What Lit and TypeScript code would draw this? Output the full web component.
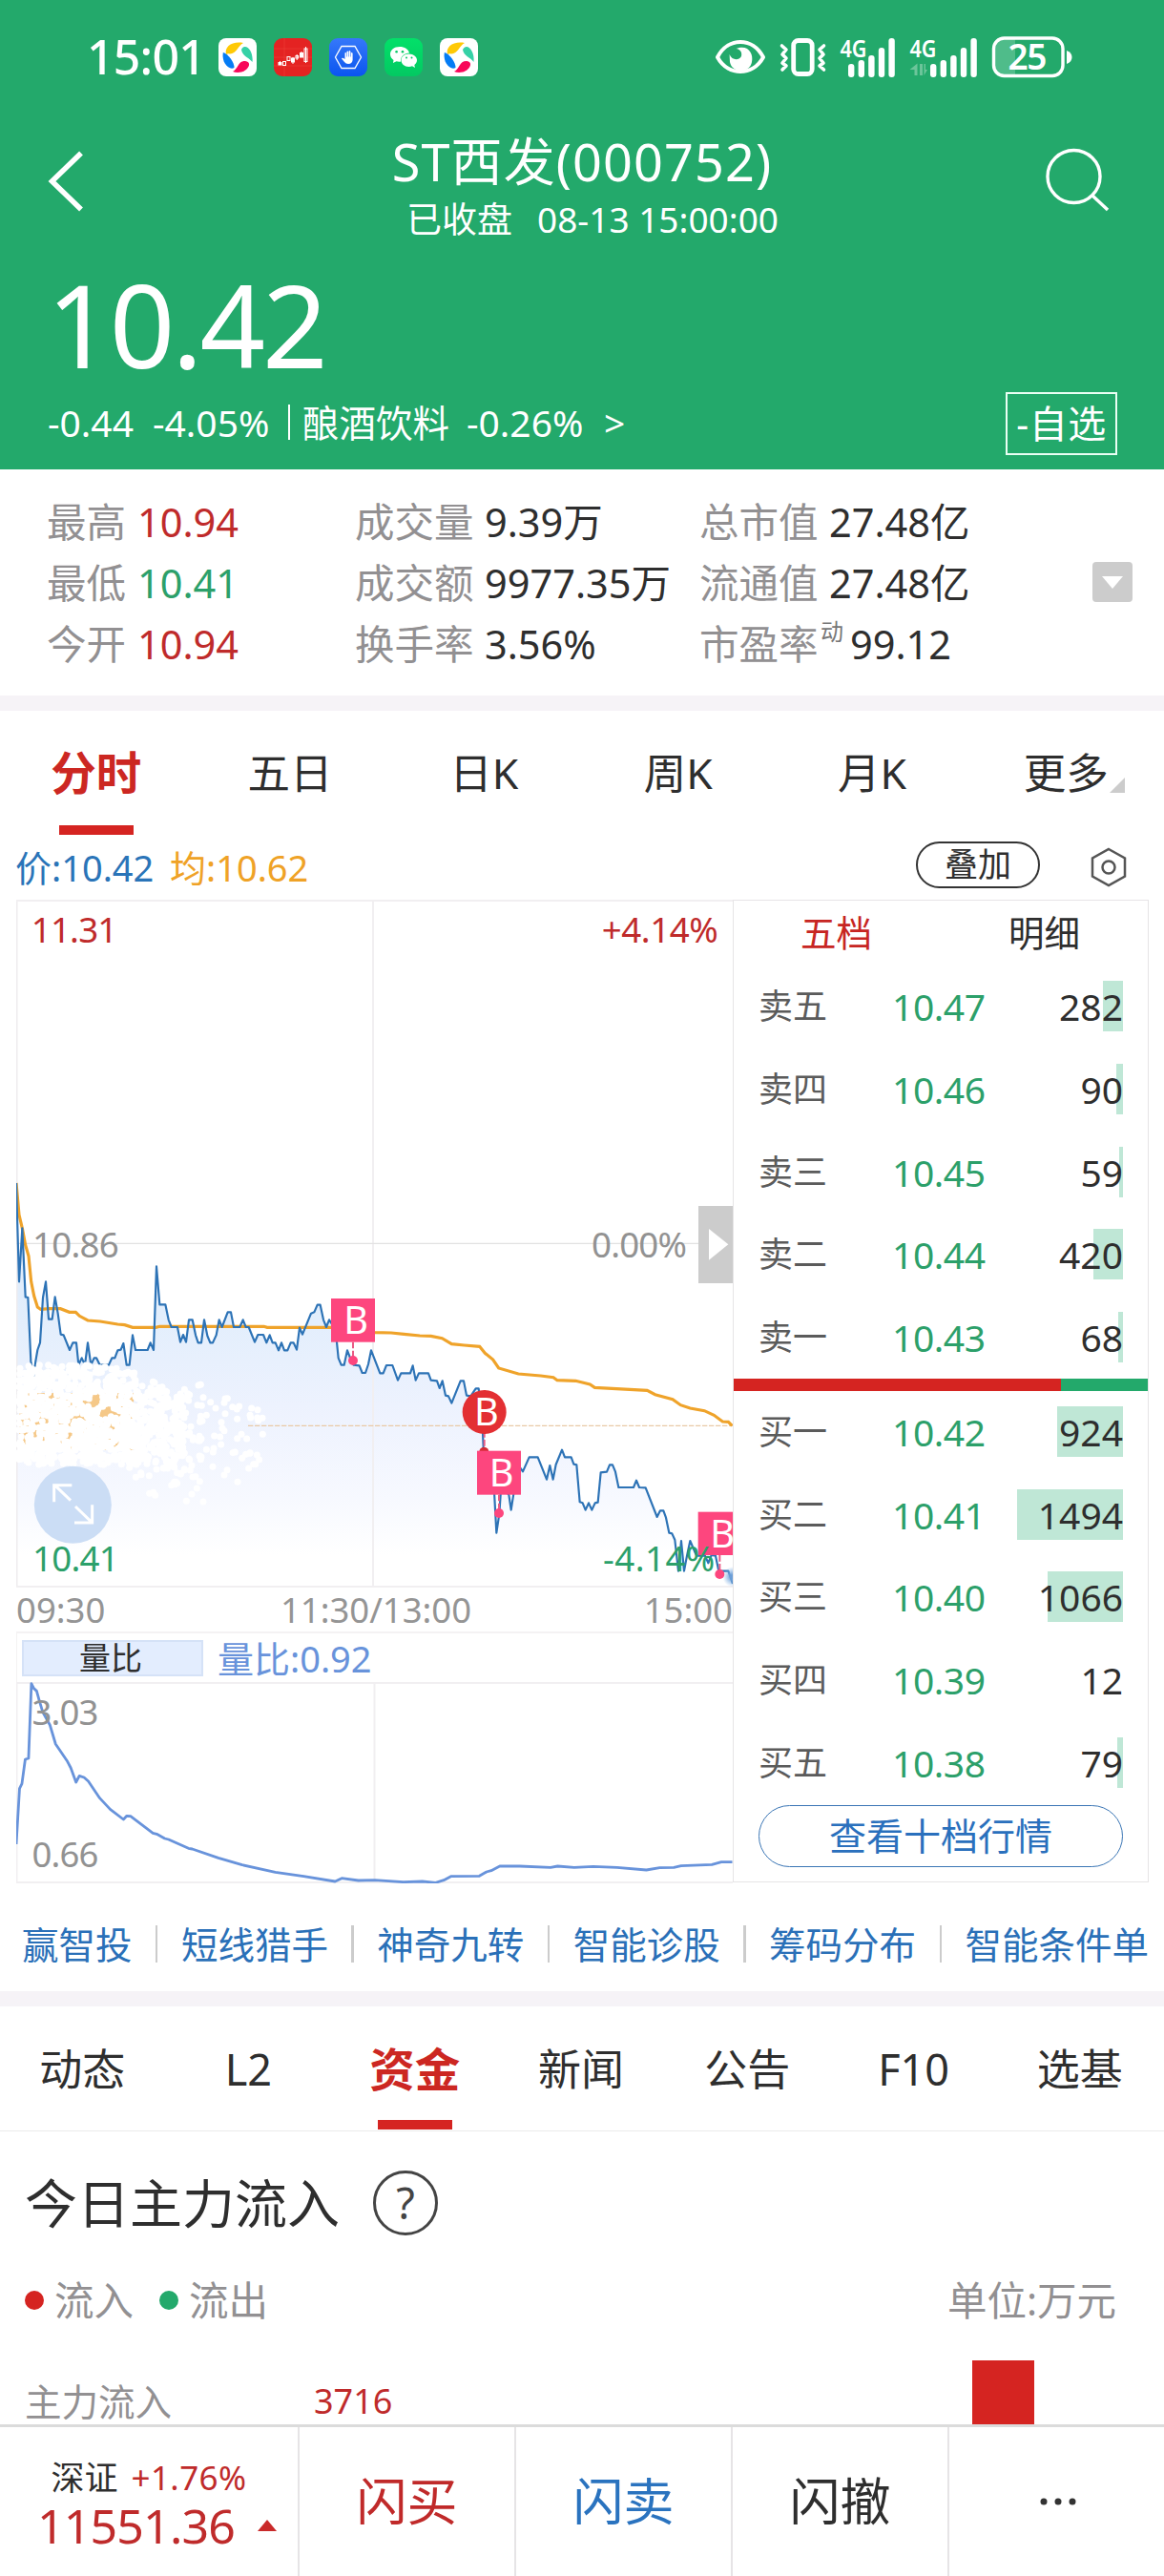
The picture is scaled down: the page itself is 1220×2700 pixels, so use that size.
import { LitElement, html, svg, css } from "lit";
import { customElement } from "lit/decorators.js";
import { classMap } from "lit/directives/class-map.js";
import { styleMap } from "lit/directives/style-map.js";

const PRICE =
  "51,180 60,490 70,322 80,538 88,540 97,740 105,790 112,740 118,705 126,682 135,540 144,490 153,608 164,608 173,538 182,590 191,656 200,658 219,705 229,682 240,682 247,752 257,730 267,752 276,682 286,752 296,730 303,730 314,752 342,752 352,730 361,730 370,706 380,704 388,684 398,752 407,752 417,658 426,705 464,705 473,682 483,705 492,442 502,562 520,562 530,610 539,633 558,633 567,680 576,657 585,680 594,610 605,610 615,658 623,682 633,682 642,610 652,660 661,682 669,682 680,658 689,610 698,633 716,586 726,586 735,633 754,633 764,610 773,633 782,633 801,680 811,657 828,657 838,682 848,658 857,682 866,682 876,706 885,682 894,706 904,706 914,682 923,682 933,704 942,635 951,656 978,590 988,586 998,563 1007,563 1017,610 1026,633 1035,610 1055,640 1064,730 1073,752 1082,752 1092,706 1103,735 1112,752 1130,754 1139,777 1149,777 1158,750 1167,706 1195,778 1205,778 1215,753 1234,753 1251,800 1261,778 1290,778 1298,754 1307,800 1317,778 1347,778 1355,800 1374,802 1382,825 1391,802 1401,848 1410,850 1420,872 1448,802 1458,802 1467,848 1480,850 1496,826 1505,826 1515,900 1520,1010 1535,1100 1554,1150 1561,1280 1570,1220 1576,1130 1590,1150 1600,1160 1607,1208 1616,1150 1625,1060 1644,1087 1664,1042 1691,1042 1719,1112 1729,1068 1739,1112 1748,1065 1767,1019 1776,1042 1796,1042 1804,1064 1813,1066 1823,1183 1832,1186 1841,1208 1851,1186 1861,1208 1871,1186 1880,1184 1889,1090 1908,1088 1917,1066 1926,1066 1935,1088 1945,1137 1992,1137 2001,1115 2010,1137 2030,1138 2066,1230 2076,1210 2086,1210 2094,1232 2104,1280 2113,1282 2122,1302 2133,1400 2142,1305 2151,1400 2160,1352 2170,1305 2190,1352 2217,1352 2227,1375 2237,1350 2250,1352 2260,1400 2290,1400 2304,1440";

const AVERAGE =
  "51,180 60,280 70,322 80,375 90,410 98,490 107,535 118,570 128,577 155,575 190,575 218,586 238,586 250,598 276,612 315,615 370,624 392,626 417,634 490,634 502,631 830,631 840,634 1040,634 1179,650 1230,651 1270,655 1320,660 1355,661 1390,668 1420,686 1460,690 1508,694 1525,715 1550,735 1568,762 1630,780 1700,786 1740,791 1752,800 1810,802 1855,813 1870,823 2035,832 2060,845 2115,860 2140,878 2170,888 2215,896 2245,910 2272,930 2290,931 2302,943";

const RATIO =
  "34,815 41,640 46,625 53,548 60,545 66,310 71,325 77,333 82,360 90,400 105,440 117,500 142,555 149,575 160,620 167,600 177,605 186,617 210,670 232,705 260,737 267,726 275,727 322,780 330,783 347,797 355,800 397,828 405,830 460,858 510,880 580,903 640,916 706,932 720,922 755,929 790,928 850,934 890,932 918,936 935,928 950,916 1010,915 1025,902 1035,898 1053,884 1095,884 1160,888 1175,884 1210,888 1250,885 1300,888 1362,896 1390,889 1420,888 1435,883 1500,879 1520,871 1543,871";

/* Repeatable scatter for the particle cloud at the left of the chart. */
function particles(): Array<[number, number]> {
  let seed = 20240813;
  const rnd = () => {
    seed = (Math.imul(seed, 1664525) + 1013904223) >>> 0;
    return seed / 4294967296;
  };
  const out: Array<[number, number]> = [];
  for (let i = 0; i < 760; i++) {
    out.push([58 + rnd() * 370, 775 + rnd() * 275]);
  }
  for (let i = 0; i < 50; i++) out.push([58 + rnd() * 360, 752 + rnd() * 30]);
  for (let i = 0; i < 60; i++) out.push([50 + rnd() * 420, 1030 + rnd() * 35]);
  for (let i = 0; i < 260; i++) {
    out.push([400 + rnd() * 180, 785 + (rnd() + rnd()) * 155]);
  }
  for (let i = 0; i < 170; i++) {
    const a = rnd() * Math.PI * 2;
    const r = Math.pow(rnd(), 0.8);
    out.push([590 + Math.cos(a) * r * 245, 975 + Math.sin(a) * r * 215]);
  }
  return out.filter(([x, y]) => y > 745 + Math.max(0, x - 250) * 0.15);
}

const DOTS = particles();

const STATS = [
  ["最高", "10.94", "red", "成交量", "9.39万", "总市值", "27.48亿", ""],
  ["最低", "10.41", "green", "成交额", "9977.35万", "流通值", "27.48亿", ""],
  ["今开", "10.94", "red", "换手率", "3.56%", "市盈率", "99.12", "动"],
];

const ASKS: Array<[string, string, number]> = [
  ["卖五", "10.47", 282],
  ["卖四", "10.46", 90],
  ["卖三", "10.45", 59],
  ["卖二", "10.44", 420],
  ["卖一", "10.43", 68],
];
const BIDS: Array<[string, string, number]> = [
  ["买一", "10.42", 924],
  ["买二", "10.41", 1494],
  ["买三", "10.40", 1066],
  ["买四", "10.39", 12],
  ["买五", "10.38", 79],
];

@customElement("app-root")
export class AppRoot extends LitElement {
  static styles = css`
    :host {
      display: block;
      width: 1220px;
      height: 2700px;
      overflow: hidden;
      background: #fff;
      color: #2e2e2e;
      font-family: "Noto Sans", "Noto Sans CJK SC", sans-serif;
      white-space: nowrap;
    }
    * { box-sizing: border-box; }
    svg { display: block; flex: none; }
    .red { color: #bf2b2b; }
    .green { color: #2ca06a; }

    .header { height: 492px; background: #23a96b; color: #fff; }
    .status { height: 120px; padding: 0 96px 0 91px; display: flex; align-items: center; }
    .clock { font-size: 50px; line-height: 60px; width: 138px; letter-spacing: -0.8px; font-weight: 500; margin-top: -2px; }
    .apps { display: flex; gap: 18px; flex: 1; }
    .sys { display: flex; align-items: center; }
    .sys svg { overflow: visible; }
    .titlebar { height: 138px; display: flex; justify-content: space-between; align-items: flex-start; padding: 0 56px 0 48px; }
    .titlebar svg { margin-top: 37px; }
    .titlebar .find { margin-top: 34px; }
    .titles { text-align: center; padding-left: 36px; }
    .name { font-size: 54px; line-height: 64px; padding-top: 17px; letter-spacing: 1.1px; }
    .state { font-size: 37px; line-height: 44px; margin-top: 7px; display: flex; justify-content: center; gap: 26px; padding-left: 22px; }
    .price { font-size: 120px; line-height: 140px; height: 140px; margin-top: 12px; padding-left: 49px; letter-spacing: -3px; }
    .change { display: flex; justify-content: space-between; align-items: center; height: 66px; margin-top: 1px; padding: 0 49px 0 50px; }
    .figures { font-size: 39px; display: grid; grid-template-columns: 110px 139px 18px 172px 144px auto; align-items: center; line-height: 50px; margin-top: -3px; }
    .figures .ind { font-size: 38.5px; }
    .bar { width: 2px; height: 37px; background: #fff; margin-left: 3px; }
    .fav { width: 117px; height: 66px; border: 2px solid #eafff4; font-size: 40px; line-height: 61px; text-align: center; letter-spacing: 0.6px; }

    .stats { height: 237px; padding: 23px 33px 0 49px; display: flex; justify-content: space-between; }
    .rows { display: grid; grid-template-columns: 323px 361px 300px; grid-auto-rows: 64px; font-size: 41.5px; }
    .cell { display: flex; align-items: center; line-height: 64px; }
    .key { color: #929092; width: 95px; }
    .key.wide { width: 136px; }
    .sup { font-size: 24px; line-height: 24px; color: #777; margin: -26px 7px 0 -9px; }
    .more { width: 42px; height: 42px; border-radius: 4px; background: #ccc; margin-top: 74px; display: flex; align-items: center; justify-content: center; }
    .band { height: 16px; background: #f6f3f7; }

    .tabs { height: 130px; display: grid; grid-template-columns: repeat(6, 1fr); font-size: 44.5px; line-height: 130px; text-align: center; }
    .tab { display: flex; flex-direction: column; align-items: center; justify-content: space-between; position: relative; right: 1px; }
    .tab.on { color: #cc2722; font-weight: 700; font-size: 47.5px; }
    .ink { width: 78px; height: 10px; background: #d52421; }
    .tabs .tab { height: 130px; }
    .tabs .label { height: 120px; }
    .corner { position: absolute; right: 40px; top: 70px; }

    .legend { height: 68px; padding: 0 39px 0 16px; display: flex; align-items: center; font-size: 38px; line-height: 60px; }
    .legend .p { color: #2a74b8; width: 162px; }
    .legend .a { color: #efa226; flex: 1; }
    .overlay { width: 130px; height: 49px; border: 2.5px solid #333; border-radius: 25px; font-size: 35px; line-height: 44px; text-align: center; margin-right: 53px; margin-top: -5px; }

    .market { display: grid; grid-template-columns: 751px 436px; padding-left: 17px; height: 1031px; }
    .charts { display: flex; flex-direction: column; }
    .axis { height: 46px; display: flex; justify-content: space-between; align-items: center; font-size: 36.5px; color: #959595; line-height: 46px; }
    .axis .mid { padding-left: 3px; }
    .indicator { height: 53px; border: 2px solid #f4f2f3; border-width: 2px 0 0 1px; display: flex; align-items: center; padding-left: 5px; }
    .chip { width: 190px; height: 38px; border: 2px solid #d5e2f7; background: #e3edfe; text-align: center; font-size: 33px; line-height: 34px; margin-right: 15px; padding-right: 4px; }
    .ratio { font-size: 38px; color: #6893db; line-height: 48px; }

    .book { border: 1.5px solid #e6e4e6; height: 1030px; }
    .booktabs { display: flex; height: 84px; font-size: 37.5px; line-height: 68px; }
    .booktabs .five { color: #c72522; margin-left: 70px; }
    .booktabs .detail { margin-left: 143px; }
    .quote { height: 53px; margin-bottom: 33.75px; padding: 0 26px 0 26px; display: grid; grid-template-columns: 140px 120px 1fr; align-items: center; line-height: 53px; }
    .quote .side { font-size: 36px; color: #5b5b5b; }
    .quote .px { font-size: 39px; color: #2ca06a; letter-spacing: -0.4px; }
    .vol { display: flex; justify-content: flex-end; height: 53px; font-size: 39px; position: relative; }
    .vol i { position: absolute; right: 0; top: 0; height: 53px; background: #bfe7d6; }
    .vol b { position: relative; font-weight: 400; }
    .split { height: 13px; display: flex; background: #23a96b; margin: -17px 0 16px; }
    .split i { width: 343px; background: #d52421; }
    .ten { margin: -16px 26px 0; height: 65px; border: 1.5px solid #3b76b5; border-radius: 33px; color: #2a70bd; font-size: 39px; line-height: 61px; text-align: center; }

    .links { height: 113px; padding: 14px 16px 0 23px; display: flex; align-items: center; justify-content: space-between; color: #2a70b8; font-size: 38.5px; line-height: 60px; }
    .links i { width: 2.5px; height: 39px; background: #ccc; }
    .tabs2 { height: 131px; display: grid; grid-template-columns: repeat(7, 1fr); font-size: 45px; line-height: 132px; border-bottom: 1.5px solid #ececec; text-align: center; }
    .tabs2 .label { height: 119px; }
    .tabs2 .tab { height: 129px; }

    .flow { height: 307px; padding: 42px 50px 0 26px; }
    .heading { display: flex; align-items: center; height: 66px; font-size: 55px; line-height: 66px; gap: 35px; }
    .help { width: 68px; height: 68px; border: 3px solid #444; border-radius: 50%; text-align: center; font-size: 45px; line-height: 61px; color: #444; }
    .units { display: flex; align-items: center; height: 60px; margin-top: 39px; color: #929092; font-size: 41.5px; line-height: 60px; }
    .dot { width: 20px; height: 20px; border-radius: 50%; background: #d52421; margin-right: 11px; }
    .dot.g { background: #23a96b; margin-left: 27px; }
    .units .unit { margin-left: auto; }
    .inflow { display: flex; height: 67px; margin-top: 33px; line-height: 86px; font-size: 38.5px; color: #929092; }
    .inflow .n { width: 303px; }
    .inflow .v { font-size: 36px; width: 690px; }
    .inflow i { width: 65px; height: 67px; background: #d52421; }

    .footer { position: relative; height: 159px; border-top: 3px solid #dbdbdb; background: #fff; display: grid; grid-template-columns: 314px repeat(4, 227px); font-size: 53px; text-align: center; }
    .footer > div { border-right: 2px solid #e6e4e6; line-height: 156px; }
    .footer > .index { line-height: 50px; padding-top: 28px; display: flex; flex-direction: column; align-items: center; }
    .small { font-size: 35px; display: flex; gap: 14px; line-height: 50px; }
    .small .red { letter-spacing: 0.4px; }
    .big { font-size: 50px; display: flex; align-items: center; gap: 24px; line-height: 50px; letter-spacing: -0.8px; padding-left: 17px; }
    .buy { color: #c02a2a; }
    .sell { color: #2a73bf; }
    .footer > .dots { display: flex; align-items: center; justify-content: center; border: 0; }
  `;

  private pinwheel() {
    return html`<svg width="40" height="40" viewBox="0 0 40 40">
      <rect width="40" height="40" rx="8" fill="#fff" />
      <path d="M8 17C6 9 14 3 26 5C20.500 8 19 16 12 16.500Q9.500 16 8 17Z" fill="#ffc905" />
      <path d="M24 12C28 4 37 13 35.500 25C32 20 25 19 24 12Z" fill="#35d1a6" />
      <path d="M4.800 15C10 16 17 26 16.500 31C11 34 3 26 4.800 15Z" fill="#057cf5" />
      <path d="M15 35C21 32 20 24 28 24C36 25 31 34 24 35.500Q19 36.500 15 35Z" fill="#f80759" />
    </svg>`;
  }

  private bars(x: number) {
    return [66, 62, 57, 49, 39].map(
      (t, i) => svg`<rect x=${x + i * 10.6} y=${t - 38} width="6.4" height=${79 - t + 1} rx="3" />`,
    );
  }

  private statusBar() {
    return html`<div class="status">
      <div class="clock">15:01</div>
      <div class="apps">
        ${this.pinwheel()}
        <svg width="40" height="40" viewBox="0 0 40 40">
          <rect width="40" height="40" rx="9" fill="#e42322" />
          <path d="M11 0V40M0 11H40M0 20H40M0 29H40" stroke="#ec3f3b" stroke-width=".6" />
          <g fill="#fff" stroke="#fff" stroke-width="1">
            <path d="M6.500 24V28M20 20V27M29 14V20" /><rect x="5" y="25.500" width="3" height="2.500" /><rect x="18.500" y="21" width="3" height="4" /><rect x="27.500" y="15.500" width="3" height="4.500" />
          </g>
          <g fill="none" stroke="#fff" stroke-width="1"><rect x="9.500" y="24.500" width="3" height="4" /><rect x="14" y="19.500" width="3" height="4" /><rect x="23" y="18.500" width="2.500" height="2.500" /><rect x="32" y="11" width="3" height="13.500" /><path d="M24.200 17V23M33.500 9V26" /></g>
        </svg>
        <svg width="40" height="40" viewBox="0 0 40 40">
          <defs><linearGradient id="bl" x1="0" y1="0" x2="0" y2="1"><stop stop-color="#3678fa" /><stop offset="1" stop-color="#0a55ef" /></linearGradient></defs>
          <rect width="40" height="40" rx="9" fill="url(#bl)" />
          <path d="M13 8.500H27L33.500 20L27 31.500H13L6.500 20Z" fill="none" stroke="#fff" stroke-width="1.300" />
          <path d="M16 25L13 21.500Q13.500 19.800 16.500 22V15.500Q17.200 14.500 18 15.500V19.500H18.500V14Q19.300 12.800 20.200 14V19.500H20.700V13.500Q21.500 12.500 22.400 14V19.500H22.900V15.500Q24 14.500 24.600 16V23Q24 27 20 27Q17.500 27 16 25Z" fill="#fff" />
        </svg>
        <svg width="40" height="40" viewBox="0 0 40 40">
          <defs><linearGradient id="wc" x1="0" y1="0" x2="0" y2="1"><stop stop-color="#03e069" /><stop offset="1" stop-color="#03c962" /></linearGradient></defs>
          <rect width="40" height="40" rx="9" fill="url(#wc)" />
          <path d="M16 9C10 9 6 12.500 6 17C6 19.500 7.500 21.500 9.500 23L9 26L12.500 24.300Q15 25 17 24.500C16.500 19 21 15.800 26 15.500C25 11.500 21 9 16 9Z" fill="#fff" />
          <path d="M25.500 16.500C20.500 16.500 17.500 19.500 17.500 23C17.500 27 21 30 25.500 30Q27.500 30 29 29.300L32 31L31.300 28C33 26.700 34 25 34 23C34 19.500 30.500 16.500 25.500 16.500Z" fill="#fff" />
          <g fill="#06c864"><circle cx="12.600" cy="14.300" r="1.300" /><circle cx="19" cy="14.300" r="1.300" /><circle cx="23" cy="20.500" r="1" /><circle cx="28.500" cy="20.500" r="1" /></g>
        </svg>
        ${this.pinwheel()}
      </div>
      <div class="sys">
        <svg width="376" height="44" viewBox="748 -1 376 44" fill="#fff" font-family="Noto Sans">
          <path d="M752 21C763 -0.500 789 -0.500 800 21C789 41 763 41 752 21Z" fill="none" stroke="#fff" stroke-width="4" stroke-linejoin="round" />
          <path d="M771.500 12C784 7 790 17 788 26C786 38 767 38 765 26L764.600 18C767 24 774 25 777 20C778 16 776 12.500 771.500 12Z" />
          <rect x="831.700" y="3.500" width="19.500" height="35" rx="5" fill="none" stroke="#fff" stroke-width="4.800" />
          <path d="M819.500 9L824 13L820 18L824 22L820 27L824 30L820 34M863.500 9L859 13L863 18L859 22L863 27L859 30L863.500 34" fill="none" stroke="#fff" stroke-width="3.600" stroke-linejoin="round" stroke-linecap="round" />
          <text x="880.500" y="20.500" font-size="26" font-weight="600" textLength="28" lengthAdjust="spacingAndGlyphs">4G</text>
          ${this.bars(889)}
          <text x="953.500" y="20.500" font-size="26" font-weight="600" textLength="28" lengthAdjust="spacingAndGlyphs">4G</text>
          ${this.bars(975)}
          <path d="M953.500 34L961.500 27.500V40H958.500V34ZM964 28H967V40H964ZM968.500 28H970V34H972L968.500 40Z" fill="#6cc59a" />
          <path d="M1050 1H1064V41H1050Q1042 40 1042 30V11Q1042 2 1050 1Z" fill="#4fbc8a" />
          <rect x="1041.500" y="1" width="72.500" height="39.500" rx="11" fill="none" stroke="#fff" stroke-width="3.400" />
          <text x="1056.500" y="34" font-size="37" font-weight="600" textLength="41">25</text>
          <path d="M1118 14Q1123.500 16 1123.500 21Q1123.500 26 1118 28Z" />
        </svg>
      </div>
    </div>`;
  }

  private mainChart() {
    return html`<svg width="751" height="721" viewBox="51 -711 2253 2163" font-family="Noto Sans" font-size="110">
      <defs>
        <linearGradient id="area" gradientUnits="userSpaceOnUse" x1="0" y1="180" x2="0" y2="1350">
          <stop offset="0" stop-color="#d8e8fb" /><stop offset=".35" stop-color="#e2eefc" /><stop offset=".6" stop-color="#edf2fe" /><stop offset=".85" stop-color="#f7f9ff" /><stop offset="1" stop-color="#fff" />
        </linearGradient>
        <radialGradient id="glow"><stop offset=".2" stop-color="#6d9fd8" /><stop offset="1" stop-color="#8bb8e8" stop-opacity="0" /></radialGradient>
      </defs>
      <polygon points=${`51,1452 ${PRICE} 2304,1452`} fill="url(#area)" />
      <g fill="none">
        <path d="M53 -711V1452" stroke="#eeecee" stroke-width="5" />
        <path d="M51 -708H2304M51 1449H2304M1173 -711V1452" stroke="#f1eff1" stroke-width="6" />
        <path d="M51 370H2304" stroke="#e2e2e2" stroke-width="4" />
        <path d="M780 943H2304" stroke="#e9c9a6" stroke-width="4" stroke-dasharray="16 5" />
      </g>
      <polyline points=${AVERAGE} fill="none" stroke="#efa32a" stroke-width="9.500" />
      <polyline points=${PRICE} fill="none" stroke="#2d73b6" stroke-width="6.500" stroke-linejoin="round" />
      <circle cx="2304" cy="1418" r="32" fill="url(#glow)" />
      <rect x="60" y="840" width="360" height="180" fill="#f5c888" />
      <g fill="#fff">${DOTS.map(([x, y]) => svg`<circle cx=${x.toFixed(0)} cy=${y.toFixed(0)} r="10.500" />`)}</g>
      <circle cx="229" cy="1192" r="121.500" fill="#cbddf5" />
      <path d="M222 1178L172 1130M226 1130H170V1183M237 1197L288 1246M234 1248H290V1192" fill="none" stroke="#fff" stroke-width="9" />
      <g fill="#929292">
        <text x="102" y="413" textLength="272">10.86</text>
        <text x="1860" y="413" textLength="300">0.00%</text>
      </g>
      <g fill="#bf2b2b">
        <text x="98" y="-576" textLength="272">11.31</text>
        <text x="1892" y="-576" textLength="366">+4.14%</text>
      </g>
      <path d="M1110 680V738M1523 960V1025M1569 1160V1218M2263 1350V1410" stroke="#ea5b85" stroke-width="6" stroke-dasharray="20 7" fill="none" />
      <circle cx="1522" cy="1025" r="15" fill="#d62b35" />
      <g fill="#fd467e">
        <circle cx="1110" cy="738" r="15" /><circle cx="1569" cy="1218" r="15" /><circle cx="2263" cy="1410" r="15" />
        <rect x="1041" y="543" width="138" height="137" /><rect x="1500" y="1022" width="138" height="138" /><rect x="2195" y="1214" width="138" height="136" />
      </g>
      <circle cx="1523" cy="900" r="69" fill="#e32f33" />
      <g fill="#fff" font-size="119">
        <text x="1081" y="654">B</text><text x="1491" y="941">B</text><text x="1538" y="1133">B</text><text x="2233" y="1326">B</text>
      </g>
      <g fill="#2ca06a">
        <text x="102" y="1400" textLength="272">10.41</text>
        <text x="1896" y="1400" textLength="352">-4.14%</text>
      </g>
      <rect x="2196" y="252" width="108" height="243" fill="#ccc" />
      <path d="M2229 324L2290 373L2229 422Z" fill="#fff" />
    </svg>`;
  }

  private quote([side, px, vol]: [string, string, number]) {
    const w = vol < 20 ? 0 : Math.round(vol * 0.0742);
    return html`<div class="quote">
      <span class="side">${side}</span><span class="px">${px}</span>
      <span class="vol"><i style=${styleMap({ width: `${w}px` })}></i><b>${vol}</b></span>
    </div>`;
  }

  private tab(label: string, on: boolean, corner = false) {
    return html`<div class=${classMap({ tab: true, on })}>
      <span class="label">${label}</span>
      ${on ? html`<div class="ink"></div>` : ""}
      ${corner ? html`<svg class="corner" width="16" height="16"><path d="M16 0V16H0Z" fill="#ccc" /></svg>` : ""}
    </div>`;
  }

  render() {
    return html`
      <div class="header">
        ${this.statusBar()}
        <div class="titlebar">
          <svg width="42" height="66" viewBox="48 157 42 66"><path d="M85 160.500L54.500 190L85 219.500" fill="none" stroke="#fff" stroke-width="5.500" /></svg>
          <div class="titles">
            <div class="name">ST西发(000752)</div>
            <div class="state"><span>已收盘</span><span>08-13 15:00:00</span></div>
          </div>
          <svg class="find" width="70" height="70" viewBox="1094 155 70 70"><circle cx="1125.500" cy="186" r="27.500" fill="none" stroke="#fff" stroke-width="3.400" /><path d="M1145 206L1161 221" stroke="#fff" stroke-width="3.400" /></svg>
        </div>
        <div class="price">10.42</div>
        <div class="change">
          <div class="figures"><span>-0.44</span><span>-4.05%</span><i class="bar"></i><span class="ind">酿酒饮料</span><span>-0.26%</span><span>&gt;</span></div>
          <div class="fav">-自选</div>
        </div>
      </div>

      <div class="stats">
        <div class="rows">
          ${STATS.map(
            (s) => html`
              <div class="cell"><span class="key">${s[0]}</span><span class=${s[2]}>${s[1]}</span></div>
              <div class="cell"><span class="key wide">${s[3]}</span><span>${s[4]}</span></div>
              <div class="cell"><span class="key wide">${s[5]}</span>${s[7] ? html`<span class="sup">${s[7]}</span>` : ""}<span>${s[6]}</span></div>
            `,
          )}
        </div>
        <div class="more"><svg width="22" height="13"><path d="M0 0H22L11 13Z" fill="#fff" /></svg></div>
      </div>
      <div class="band"></div>

      <div class="tabs">
        ${["分时", "五日", "日K", "周K", "月K", "更多"].map((t, i) => this.tab(t, i === 0, i === 5))}
      </div>

      <div class="legend">
        <span class="p">价:10.42</span><span class="a">均:10.62</span>
        <span class="overlay">叠加</span>
        <svg width="38" height="42" viewBox="0 0 38 42" fill="none" stroke="#555" stroke-width="2.500"><path d="M19 2L36 11.500V30.500L19 40L2 30.500V11.500Z" /><circle cx="19" cy="21" r="6.500" /></svg>
      </div>

      <div class="market">
        <div class="charts">
          ${this.mainChart()}
          <div class="axis"><span>09:30</span><span class="mid">11:30/13:00</span><span>15:00</span></div>
          <div class="indicator"><span class="chip">量比</span><span class="ratio">量比:0.92</span></div>
          <svg width="751" height="211" viewBox="0 0 751 211">
            <path d="M0 1H751M0 210H751M375.500 0V211M.500 0V211" stroke="#f1eff1" stroke-width="2" fill="none" />
            <svg width="751" height="211" viewBox="34 305 1510 633" preserveAspectRatio="none">
              <polyline points=${RATIO} fill="none" stroke="#6893db" stroke-width="2.800" vector-effect="non-scaling-stroke" stroke-linejoin="round" />
            </svg>
            <g font-family="Noto Sans" font-size="36.500" fill="#929292"><text x="16.500" y="44.500" textLength="70">3.03</text><text x="16.500" y="193.500" textLength="70">0.66</text></g>
          </svg>
        </div>
        <div class="book">
          <div class="booktabs"><span class="five">五档</span><span class="detail">明细</span></div>
          ${ASKS.map((q) => this.quote(q))}
          <div class="split"><i></i></div>
          ${BIDS.map((q) => this.quote(q))}
          <div class="ten">查看十档行情</div>
        </div>
      </div>

      <div class="links">
        ${["赢智投", "短线猎手", "神奇九转", "智能诊股", "筹码分布", "智能条件单"].map(
          (t, i) => html`${i ? html`<i></i>` : ""}<span>${t}</span>`,
        )}
      </div>
      <div class="band"></div>

      <div class="tabs2">
        ${["动态", "L2", "资金", "新闻", "公告", "F10", "选基"].map((t, i) => this.tab(t, i === 2))}
      </div>

      <div class="flow">
        <div class="heading"><span>今日主力流入</span><span class="help">?</span></div>
        <div class="units"><i class="dot"></i><span>流入</span><i class="dot g"></i><span>流出</span><span class="unit">单位:万元</span></div>
        <div class="inflow"><span class="n">主力流入</span><span class="v red">3716</span><i></i></div>
      </div>

      <div class="footer">
        <div class="index">
          <div class="small"><span>深证</span><span class="red">+1.76%</span></div>
          <div class="big red"><span>11551.36</span><svg width="20" height="12"><path d="M0 12H20L10 0Z" fill="#c92a2a" /></svg></div>
        </div>
        <div class="buy">闪买</div>
        <div class="sell">闪卖</div>
        <div>闪撤</div>
        <div class="dots"><svg width="38" height="8"><g fill="#333"><circle cx="4" cy="4" r="3.500" /><circle cx="19" cy="4" r="3.500" /><circle cx="34" cy="4" r="3.500" /></g></svg></div>
      </div>
    `;
  }
}
